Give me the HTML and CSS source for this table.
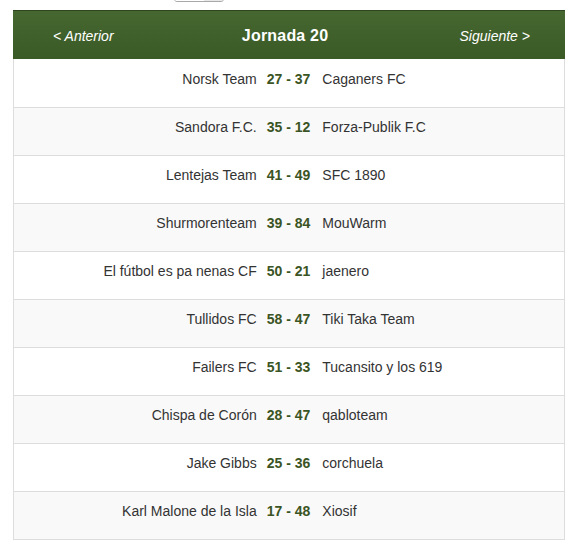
FILE: index.html
```html
<!DOCTYPE html>
<html lang="es">
<head>
<meta charset="utf-8">
<title>Jornada 20</title>
<link rel="stylesheet" href="styles.css">
</head>
<body>
<div class="wrap">
  <div class="topbar"><div class="pager"><span class="pager-a"></span><span class="pager-b"></span></div></div>
  <div class="header">
    <a class="nav" href="#">&lt; Anterior</a>
    <span class="title">Jornada 20</span>
    <a class="nav" href="#">Siguiente &gt;</a>
  </div>
  <div class="table">
    <div class="row"><span class="home">Norsk Team</span><span class="score">27 - 37</span><span class="away">Caganers FC</span></div>
    <div class="row"><span class="home">Sandora F.C.</span><span class="score">35 - 12</span><span class="away">Forza-Publik F.C</span></div>
    <div class="row"><span class="home">Lentejas Team</span><span class="score">41 - 49</span><span class="away">SFC 1890</span></div>
    <div class="row"><span class="home">Shurmorenteam</span><span class="score">39 - 84</span><span class="away">MouWarm</span></div>
    <div class="row"><span class="home">El fútbol es pa nenas CF</span><span class="score">50 - 21</span><span class="away">jaenero</span></div>
    <div class="row"><span class="home">Tullidos FC</span><span class="score">58 - 47</span><span class="away">Tiki Taka Team</span></div>
    <div class="row"><span class="home">Failers FC</span><span class="score">51 - 33</span><span class="away">Tucansito y los 619</span></div>
    <div class="row"><span class="home">Chispa de Corón</span><span class="score">28 - 47</span><span class="away">qabloteam</span></div>
    <div class="row"><span class="home">Jake Gibbs</span><span class="score">25 - 36</span><span class="away">corchuela</span></div>
    <div class="row"><span class="home">Karl Malone de la Isla</span><span class="score">17 - 48</span><span class="away">Xiosif</span></div>
  </div>
</div>
</body>
</html>
```

FILE: styles.css
```css
html, body {
  margin: 0;
  padding: 0;
  background: #fff;
}
body {
  font-family: "Liberation Sans", Arial, sans-serif;
  font-size: 14px;
  color: #333;
}
.wrap {
  width: 552px;
  margin-left: 13px;
}
.topbar {
  height: 10px;
  overflow: hidden;
}
.pager {
  display: flex;
  margin-left: 161px;
  margin-top: -9px;
  width: 50px;
  height: 11px;
  border: 1px solid #a8a8a8;
  border-radius: 3px;
  overflow: hidden;
  box-sizing: border-box;
}
.pager-a { flex: 29px 0 0; background: #fff; }
.pager-b { flex: 1; background: #e8e8e8; }
.header {
  display: flex;
  align-items: center;
  justify-content: space-between;
  box-sizing: border-box;
  height: 49px;
  padding: 1px 35px 0 40px;
  background: linear-gradient(#466730, #3a5a26);
  border-top: 1px solid #2c4420;
}
.nav {
  color: #fff;
  font-style: italic;
  font-size: 14px;
  text-decoration: none;
}
.title {
  color: #fff;
  font-weight: bold;
  font-size: 16px;
  letter-spacing: 0.2px;
  margin-right: 3px;
}
.table {
  border: 1px solid #ddd;
  border-top: none;
  box-sizing: border-box;
}
.row {
  display: grid;
  grid-template-columns: 1fr auto 1fr;
  height: 48px;
  box-sizing: border-box;
  padding-top: 9px;
  line-height: 20px;
  border-top: 1px solid #ddd;
}
.row:first-child { border-top: none; padding-top: 10px; }
.row:nth-child(even) { background: #f9f9f9; }
.home { text-align: right; padding-right: 5px; }
.score { padding: 0 6px 0 5px; font-weight: bold; color: #3b5424; }
.away { padding-left: 6px; }
```
